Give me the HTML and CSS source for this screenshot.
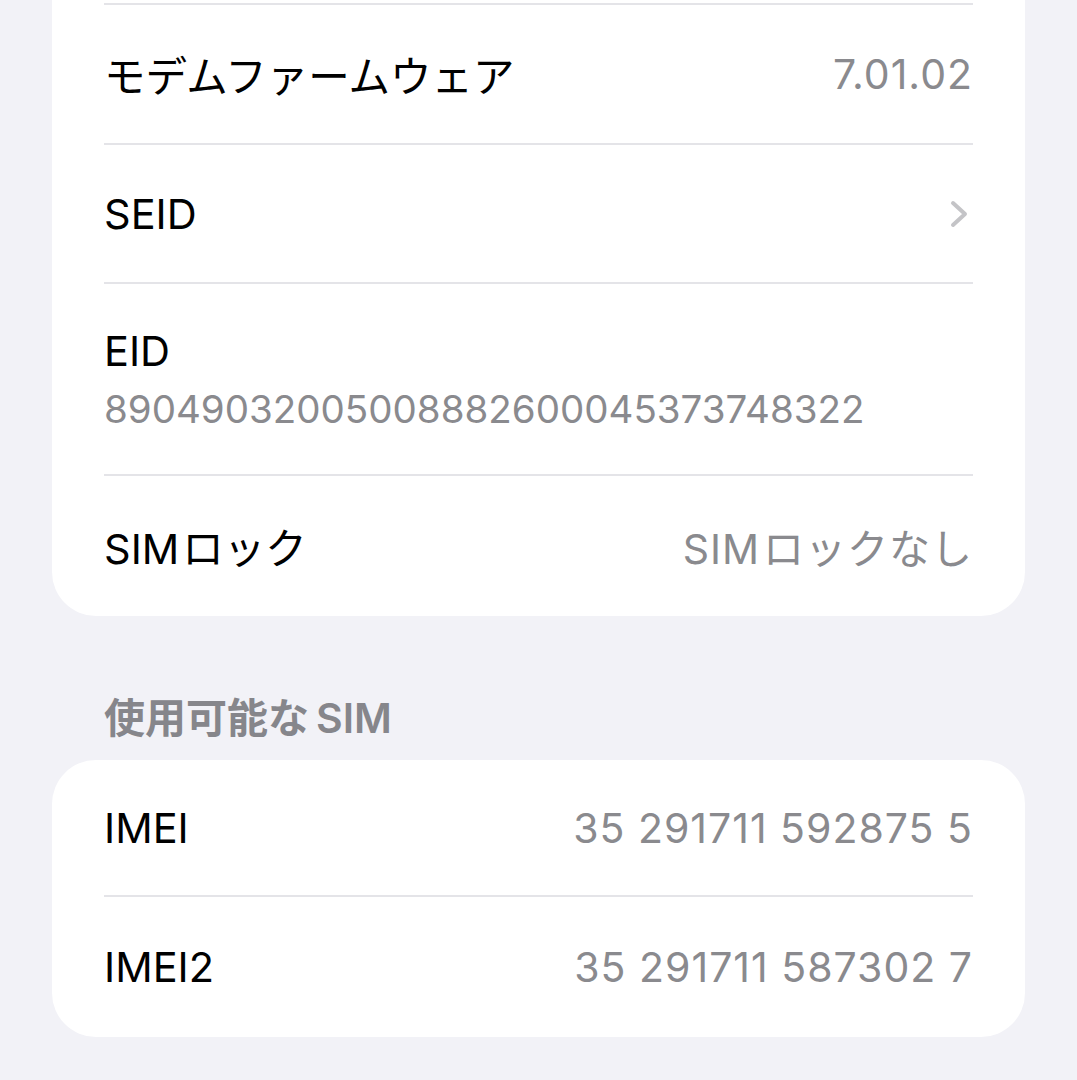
FILE: index.html
```html
<!DOCTYPE html>
<html lang="ja">
<head>
  <meta charset="UTF-8" />
  <meta name="viewport" content="width=device-width, initial-scale=1" />
  <title>情報</title>
  <link rel="stylesheet" href="styles.css">
</head>
<body>

  <section class="group group-top">
    <div class="row">
      <span class="label">モデムファームウェア</span>
      <span class="value">7.01.02</span>
    </div>
    <div class="row">
      <span class="label">SEID</span>
      <svg class="chevron" width="20" height="28" viewBox="0 0 20 28">
        <polyline points="4,3 16,14 4,25" fill="none" stroke="#c4c4c7" stroke-width="4" stroke-linecap="round" stroke-linejoin="round" />
      </svg>
    </div>
    <div class="row row-stack">
      <span class="label">EID</span>
      <span class="sub">89049032005008882600045373748322</span>
    </div>
    <div class="row">
      <span class="label">SIM<span class="gap"></span>ロック</span>
      <span class="value">SIM<span class="gap"></span>ロックなし</span>
    </div>
  </section>

  <h2 class="section-title">使用可能な<span class="gap wide"></span>SIM</h2>

  <section class="group">
    <div class="row">
      <span class="label">IMEI</span>
      <span class="value">35 291711 592875 5</span>
    </div>
    <div class="row">
      <span class="label">IMEI2</span>
      <span class="value">35 291711 587302 7</span>
    </div>
  </section>

</body>
</html>
```

FILE: styles.css
```css
body {
  margin: 0;
  padding: 0;
  background-color: #f2f2f7;
  color: #000;
  font-family: Inter, "Noto Sans CJK JP", sans-serif;
}

.group {
  margin: 0 52px;
  background-color: #fff;
  border-radius: 44px;
}

.group-top {
  padding-top: 3px;
  border-radius: 0 0 44px 44px;
}

.row {
  display: flex;
  justify-content: space-between;
  align-items: center;
  height: 139px;
  box-sizing: border-box;
  margin: 0 52px;
  border-bottom: 2px solid #e4e4e8;
}

.group .row:first-child {
  height: 137px;
}

.group-top .row:first-child {
  height: 142px;
  border-top: 2px solid #e4e4e8;
}

.row:last-child {
  border-bottom: none;
  height: 140px;
}

.gap {
  display: inline-block;
  width: 3px;
}

.gap.wide {
  width: 7px;
}

.label {
  font-size: 41.5px;
}

.value {
  font-size: 41px;
  color: #8a8a8e;
  letter-spacing: 1px;
}

.chevron {
  margin-right: 4px;
}

.row-stack {
  flex-direction: column;
  align-items: flex-start;
  justify-content: flex-start;
  height: 192px;
  padding-top: 42px;
}

.row-stack .sub {
  margin-top: 10px;
  font-size: 38.5px;
  color: #8a8a8e;
}

.section-title {
  margin: 79px 0 19px 104px;
  font-size: 41px;
  line-height: 46px;
  font-weight: 600;
  color: #86868b;
}
```
